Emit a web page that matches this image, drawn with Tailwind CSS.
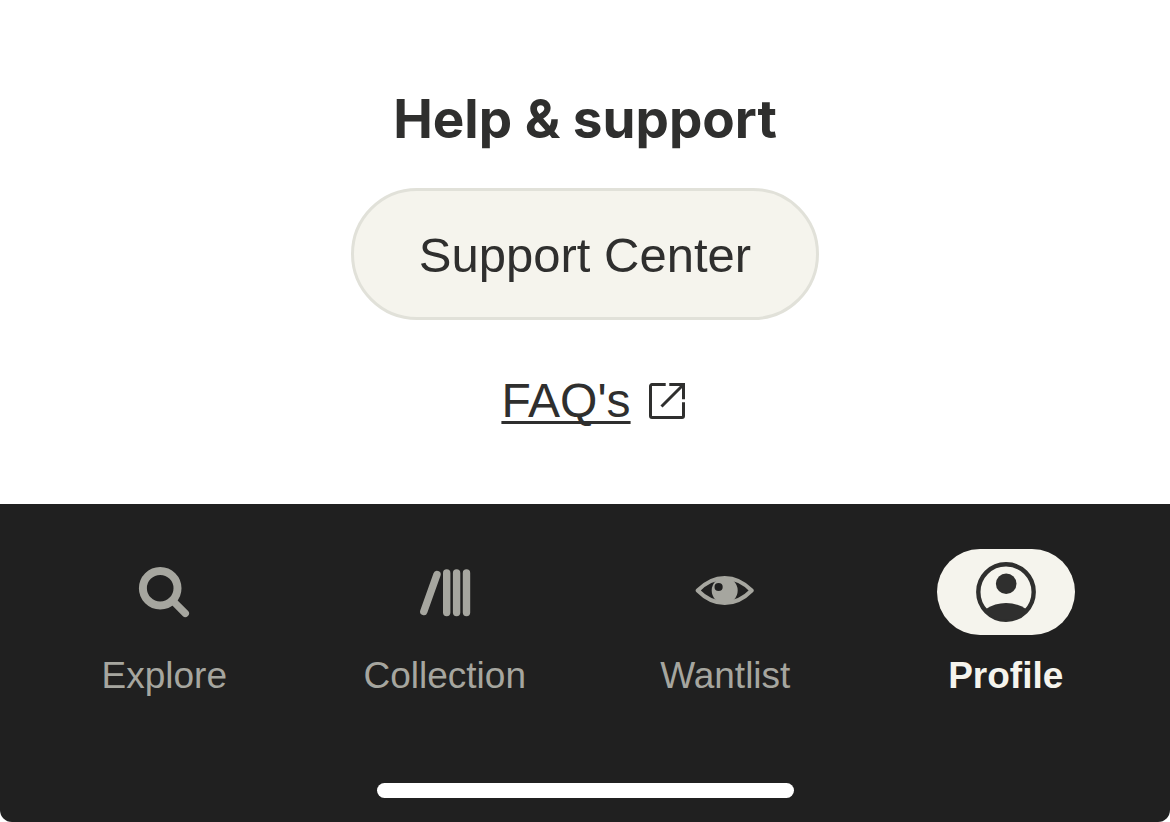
<!DOCTYPE html>
<html lang="en">
<head>
    <meta charset="UTF-8">
    <meta name="viewport" content="width=device-width, initial-scale=1.0">
    <title>Profile</title>
    <script src="https://cdn.jsdelivr.net/npm/@tailwindcss/browser@4"></script>
</head>
<body class="bg-white font-['Liberation_Sans',Arial,sans-serif] text-[#2f2f2e]">
    <div class="flex min-h-screen flex-col">
        <!-- Help & support -->
        <main class="flex grow flex-col items-center pt-[87px] pb-[73px]">
            <h1 class="font-[Inter,sans-serif] text-[53px] leading-[64px] font-bold">Help &amp; support</h1>
            <button type="button" class="mt-[37px] h-[132px] rounded-full border-3 border-[#e1e1d9] bg-[#f5f4ed] px-[65px] pt-0.5 text-[49px] leading-[56px]">Support Center</button>
            <a href="#" class="mt-[51px] flex items-center gap-[18px] pl-4 text-[48px] leading-[60px]">
                <span class="underline decoration-3 underline-offset-4 [text-decoration-skip-ink:none]">FAQ's</span>
                <svg class="size-9" viewBox="0 0 36 36" fill="none" stroke="currentColor" stroke-width="3" aria-hidden="true">
                    <path d="M16.7 1.5H3A1.5 1.5 0 0 0 1.5 3V33A1.5 1.5 0 0 0 3 34.5H33A1.5 1.5 0 0 0 34.5 33V19.2"/>
                    <path d="M20.3 1.5H34.5V16.3M34 2L12.5 23.5"/>
                </svg>
            </a>
        </main>

        <!-- Tab bar -->
        <footer class="rounded-b-xl bg-[#202020] pt-[45px] pb-6">
            <nav class="grid grid-cols-4 px-6 text-[37px] leading-[44px] text-[#a6a69f]">
                <a href="#" class="flex flex-col items-center gap-[19px]">
                    <span class="flex h-[86px] w-[138px] items-center justify-center">
                        <svg class="size-[60px]" viewBox="0 0 60 60" fill="none" stroke="currentColor" aria-hidden="true">
                            <circle cx="26.2" cy="26.2" r="17.3" stroke-width="8"/>
                            <path d="M39 39L51.3 51.3" stroke-width="7.4" stroke-linecap="round"/>
                        </svg>
                    </span>
                    Explore
                </a>
                <a href="#" class="flex flex-col items-center gap-[19px]">
                    <span class="flex h-[86px] w-[138px] items-center justify-center">
                        <svg class="size-[60px]" viewBox="0 0 60 60" fill="none" stroke="currentColor" stroke-width="7.4" stroke-linecap="round" aria-hidden="true">
                            <path d="M22 12.5L8.8 49.5M31.7 11V50.5M41.6 11V50.5M51.5 11V50.5"/>
                        </svg>
                    </span>
                    Collection
                </a>
                <a href="#" class="flex flex-col items-center gap-[19px]">
                    <span class="flex h-[86px] w-[138px] items-center justify-center">
                        <svg class="size-[60px]" viewBox="0 0 60 60" aria-hidden="true">
                            <path d="M2.7 28.5Q15 16 29.7 16T56.7 28.5Q44.4 41 29.7 41T2.7 28.5Z" fill="none" stroke="currentColor" stroke-width="4" stroke-linejoin="round"/>
                            <path d="M29.7 15.5a13 13 0 1 0 0 26a13 13 0 1 0 0-26ZM23.6 20.9a4.1 4.1 0 1 1 0 8.2a4.1 4.1 0 1 1 0-8.2Z" fill="currentColor" fill-rule="evenodd"/>
                        </svg>
                    </span>
                    Wantlist
                </a>
                <a href="#" aria-current="page" class="flex flex-col items-center gap-[19px] font-bold text-[#f5f4ed]">
                    <span class="flex h-[86px] w-[138px] items-center justify-center rounded-full bg-[#f5f4ed] text-[#2f2f2e]">
                        <svg class="size-[60px]" viewBox="0 0 60 60" aria-hidden="true">
                            <circle cx="30" cy="30" r="27.7" fill="none" stroke="currentColor" stroke-width="4.4"/>
                            <circle cx="30.2" cy="21.8" r="10.3" fill="currentColor"/>
                            <path d="M9.5 47.2Q19 41 30 41T50.5 47.2Q42 58 30 58T9.5 47.2Z" fill="currentColor"/>
                        </svg>
                    </span>
                    Profile
                </a>
            </nav>
            <div class="mx-auto mt-[85px] h-[15px] w-[417px] rounded-full bg-white"></div>
        </footer>
    </div>
</body>
</html>
